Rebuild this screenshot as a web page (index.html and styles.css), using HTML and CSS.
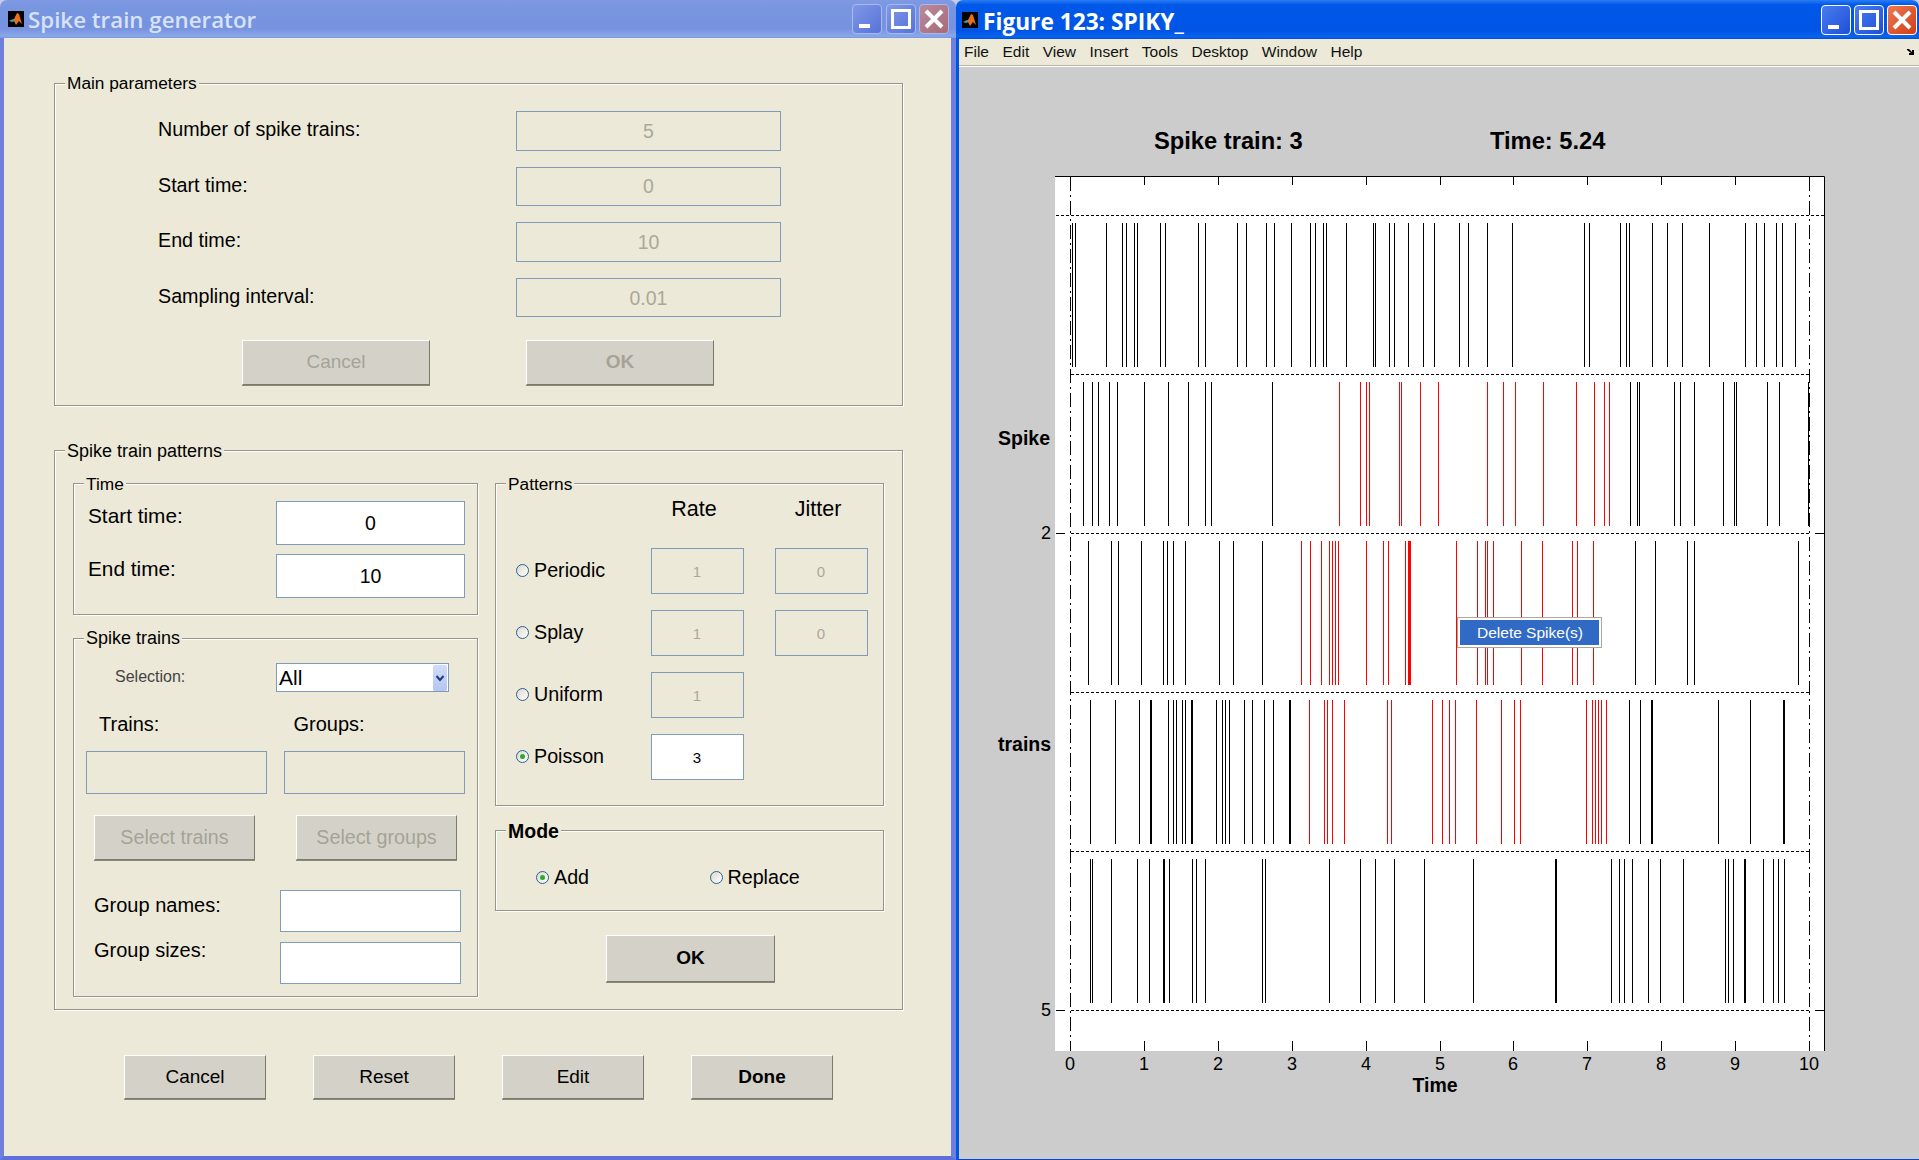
FILE: index.html
```html
<!DOCTYPE html>
<html lang="en">
<head>
  <meta charset="UTF-8" />
  <title>Spike train generator</title>
  <link rel="stylesheet" href="styles.css">
</head>
<body>

  <div class="desktop">

    <!-- left window: generator dialog -->
    <section class="dialog">
      <header class="titlebar inactive">
        <svg class="app-icon" viewBox="0 0 16 16"><rect width="16" height="16" fill="#000"/><path d="M2 10 L6 8 L9 2 L11 3 L14 13 L11 10 L8 14 L6 10 Z" fill="#e8701a"/><path d="M1 10 L5 8 L7 10 L4 11 Z" fill="#3aa0b8"/></svg>
        <span class="title-text">Spike train generator</span>
        <div class="win-btns">
          <button class="win-btn"><svg viewBox="0 0 30 30"><rect x="7" y="20" width="11" height="4" fill="#fff"/></svg></button>
          <button class="win-btn"><svg viewBox="0 0 30 30"><rect x="6.5" y="6.5" width="17" height="17" fill="none" stroke="#fff" stroke-width="3"/></svg></button>
          <button class="win-btn close"><svg viewBox="0 0 30 30"><path d="M7 7 L23 23 M23 7 L7 23" stroke="#fff" stroke-width="4"/></svg></button>
        </div>
      </header>

      <div class="dialog-body">

        <fieldset class="group main-params">
          <legend>Main parameters</legend>
          <div class="param-row"><label>Number of spike trains:</label><div class="field off">5</div></div>
          <div class="param-row"><label>Start time:</label><div class="field off">0</div></div>
          <div class="param-row"><label>End time:</label><div class="field off">10</div></div>
          <div class="param-row"><label>Sampling interval:</label><div class="field off">0.01</div></div>
          <div class="param-btns">
            <button class="btn disabled">Cancel</button>
            <button class="btn disabled strong">OK</button>
          </div>
        </fieldset>

        <fieldset class="group patterns-outer">
          <legend>Spike train patterns</legend>
          <div class="pattern-cols">

            <div class="col-left">
              <fieldset class="group time-box">
                <legend>Time</legend>
                <div class="time-row"><label>Start time:</label><div class="field">0</div></div>
                <div class="time-row"><label>End time:</label><div class="field">10</div></div>
              </fieldset>

              <fieldset class="group trains-box">
                <legend>Spike trains</legend>
                <div class="select-row">
                  <label>Selection:</label>
                  <div class="select">
                    <span>All</span>
                    <span class="select-arrow"><svg viewBox="0 0 14 26"><path d="M3.5 11 L7 15 L10.500 11" fill="none" stroke="#1d3c7a" stroke-width="2"/></svg></span>
                  </div>
                </div>
                <div class="pair-labels"><label>Trains:</label><label>Groups:</label></div>
                <div class="pair-fields"><div class="field off"></div><div class="field off"></div></div>
                <div class="pair-btns">
                  <button class="btn disabled">Select trains</button>
                  <button class="btn disabled">Select groups</button>
                </div>
                <div class="group-row"><label>Group names:</label><div class="field"></div></div>
                <div class="group-row tight"><label>Group sizes:</label><div class="field"></div></div>
              </fieldset>
            </div>

            <div class="col-right">
              <fieldset class="group patterns-box">
                <legend>Patterns</legend>
                <div class="rate-grid">
                  <span></span><span class="col-head">Rate</span><span class="col-head">Jitter</span>
                  <div class="radio-label"><span class="radio"></span>Periodic</div><div class="field off small">1</div><div class="field off small">0</div>
                  <div class="radio-label"><span class="radio"></span>Splay</div><div class="field off small">1</div><div class="field off small">0</div>
                  <div class="radio-label"><span class="radio"></span>Uniform</div><div class="field off small">1</div><span></span>
                  <div class="radio-label"><span class="radio on"></span>Poisson</div><div class="field small">3</div><span></span>
                </div>
              </fieldset>

              <fieldset class="group mode-box">
                <legend>Mode</legend>
                <div class="mode-row">
                  <div class="radio-label"><span class="radio on"></span>Add</div>
                  <div class="radio-label"><span class="radio"></span>Replace</div>
                </div>
              </fieldset>

              <button class="btn strong ok-btn">OK</button>
            </div>

          </div>
        </fieldset>

        <div class="bottom-btns">
          <button class="btn">Cancel</button>
          <button class="btn">Reset</button>
          <button class="btn">Edit</button>
          <button class="btn strong">Done</button>
        </div>

      </div>
    </section>

    <!-- right window: figure -->
    <section class="figure-win">
      <header class="titlebar active">
        <svg class="app-icon" viewBox="0 0 16 16"><rect width="16" height="16" fill="#000"/><path d="M2 10 L6 8 L9 2 L11 3 L14 13 L11 10 L8 14 L6 10 Z" fill="#e8701a"/><path d="M1 10 L5 8 L7 10 L4 11 Z" fill="#3aa0b8"/></svg>
        <span class="title-text">Figure 123: SPIKY_</span>
        <div class="win-btns">
          <button class="win-btn"><svg viewBox="0 0 30 30"><rect x="7" y="20" width="11" height="4" fill="#fff"/></svg></button>
          <button class="win-btn"><svg viewBox="0 0 30 30"><rect x="6.5" y="6.5" width="17" height="17" fill="none" stroke="#fff" stroke-width="3"/></svg></button>
          <button class="win-btn close"><svg viewBox="0 0 30 30"><path d="M7 7 L23 23 M23 7 L7 23" stroke="#fff" stroke-width="4"/></svg></button>
        </div>
      </header>

      <div class="figure-body">
        <nav class="menubar">
          <span>File</span><span>Edit</span><span>View</span><span>Insert</span><span>Tools</span><span>Desktop</span><span>Window</span><span>Help</span>
          <svg class="dock-arrow" viewBox="0 0 8 8"><path d="M0 1 L2 1 L5 4 L5 2 L7 2 L7 7 L2 7 L2 5 L4 5 L0 2 Z" fill="#000"/></svg>
        </nav>

        <div class="figure">
          <!-- viewBox uses page coordinates so the spike lists below stay readable -->
          <svg id="plot" class="plot" viewBox="959 66 960 1093">
            <text class="head" x="1154" y="149">Spike train: 3</text>
            <text class="head" x="1490" y="149">Time: 5.24</text>

            <rect x="1055" y="176" width="770" height="875" fill="#fff"/>
            <g id="spikes"></g>
            <path class="axis" d="M1055 176.500 H1824.500 V1051"/>
            <g id="ticks"></g>

            <text class="axis-title" x="998" y="445">Spike</text>
            <text class="axis-title" x="998" y="751">trains</text>
            <text class="tick-label end" x="1051" y="539">2</text>
            <text class="tick-label end" x="1051" y="1016">5</text>

            <text class="tick-label" x="1070" y="1070">0</text>
            <text class="tick-label" x="1144" y="1070">1</text>
            <text class="tick-label" x="1218" y="1070">2</text>
            <text class="tick-label" x="1292" y="1070">3</text>
            <text class="tick-label" x="1366" y="1070">4</text>
            <text class="tick-label" x="1440" y="1070">5</text>
            <text class="tick-label" x="1513" y="1070">6</text>
            <text class="tick-label" x="1587" y="1070">7</text>
            <text class="tick-label" x="1661" y="1070">8</text>
            <text class="tick-label" x="1735" y="1070">9</text>
            <text class="tick-label" x="1809" y="1070">10</text>
            <text class="axis-title middle" x="1435" y="1092">Time</text>
          </svg>

          <div class="context-menu"><div class="context-item">Delete Spike(s)</div></div>
        </div>
      </div>
    </section>

  </div>

  <script>
    const SVG_NS = 'http://www.w3.org/2000/svg';

    // one entry per train: top of the row, then x positions [black, red, thick black]
    const trains = [
      { y: 223, black: [1072,1075,1106,1122,1126,1134,1137,1160,1165,1198,1205,1237,1246,1266,1274,1291,1310,1315,1323,1326,1346,1373,1375,1389,1394,1408,1423,1434,1459,1468,1487,1512,1584,1589,1620,1626,1629,1652,1667,1682,1709,1745,1756,1764,1776,1782,1795], red: [], thick: [] },
      { y: 382, black: [1083,1092,1098,1109,1117,1144,1168,1188,1205,1211,1272,1630,1637,1639,1674,1680,1694,1723,1734,1736,1767,1779,1808], red: [1339,1360,1366,1369,1399,1401,1420,1438,1487,1503,1515,1543,1576,1594,1604,1609], thick: [] },
      { y: 541, black: [1088,1111,1118,1141,1163,1167,1173,1185,1219,1233,1262,1635,1655,1687,1694,1798], red: [1301,1310,1321,1329,1332,1335,1338,1366,1383,1388,1405,1408,1409,1410,1456,1477,1485,1487,1493,1521,1542,1572,1577,1593], thick: [] },
      { y: 700, black: [1090,1115,1139,1168,1173,1176,1182,1185,1216,1222,1225,1229,1244,1252,1264,1273,1629,1640,1718,1750], red: [1309,1324,1327,1332,1344,1387,1391,1432,1442,1449,1455,1476,1501,1514,1520,1586,1592,1595,1598,1601,1606], thick: [1150,1191,1289,1651,1783] },
      { y: 859, black: [1090,1092,1111,1137,1149,1169,1192,1196,1205,1262,1265,1329,1360,1375,1394,1424,1473,1611,1619,1624,1632,1648,1660,1683,1725,1728,1733,1763,1773,1778,1784], red: [], thick: [1163,1555,1744] }
    ];

    function addPath(parent, cls, d) {
      const p = document.createElementNS(SVG_NS, 'path');
      p.setAttribute('class', cls);
      p.setAttribute('d', d);
      parent.appendChild(p);
    }

    function spikePath(xs, y) {
      return xs.map(x => `M${x + 0.5} ${y}V${y + 144}`).join('');
    }

    const spikes = document.getElementById('spikes');
    trains.forEach(t => {
      addPath(spikes, 'spike', spikePath(t.black, t.y));
      addPath(spikes, 'spike red', spikePath(t.red, t.y));
      addPath(spikes, 'spike thick', t.thick.map(x => `M${x + 1} ${t.y}V${t.y + 144}`).join(''));
    });

    const ticks = document.getElementById('ticks');
    [1070,1144,1218,1292,1366,1440,1513,1587,1661,1735,1809].forEach(x => {
      addPath(ticks, 'axis', `M${x + 0.5} 177V185M${x + 0.5} 1041V1051`);
    });
    [533,1010].forEach(y => {
      addPath(ticks, 'axis', `M1056 ${y + 0.5}H1065M1815 ${y + 0.5}H1824`);
    });

    // dashed train separators and the two dash-dot limits
    addPath(ticks, 'sep', 'M1056 215.500H1824');
    [374,533,692,851,1010].forEach(y => addPath(ticks, 'sep', `M1071 ${y + 0.5}H1810`));
    [1070,1809].forEach(x => addPath(ticks, 'limit', `M${x + 0.5} 177V1051`));
  </script>

</body>
</html>
```

FILE: styles.css
```css
* {
  box-sizing: border-box;
}

html, body {
  margin: 0;
  height: 100%;
  overflow: hidden;
}

body {
  font-family: "Liberation Sans", Arial, sans-serif;
  font-size: 19.700px;
  color: #000;
  background-color: #c5cde8;
}

.desktop {
  display: flex;
  width: 1919px;
  height: 1160px;
}

/* windows */

.dialog {
  width: 956px;
  display: flex;
  flex-direction: column;
}

.figure-win {
  width: 963px;
  display: flex;
  flex-direction: column;
}

.titlebar {
  display: flex;
  align-items: center;
  flex: none;
  border-radius: 7px 7px 0 0;
}

.titlebar.inactive {
  height: 38px;
  padding: 0 7px 0 8px;
  background: linear-gradient(#8099e4, #7896e0 20%, #7792df 75%, #89a8ea 95%, #7b95df);
  color: #d6e2f7;
}

.titlebar.active {
  height: 39px;
  padding: 0 2px 0 6px;
  background: linear-gradient(#2a7df5, #0058e8 12%, #0055e5 80%, #0a64f0 94%, #0050d8);
  color: #fff;
}

.app-icon {
  width: 16px;
  height: 16px;
  flex: none;
}

.title-text {
  font-family: "Open Sans", sans-serif;
  font-weight: 600;
  font-size: 22.300px;
  margin-left: 4px;
  white-space: nowrap;
}

.titlebar.active .title-text {
  font-size: 22.700px;
  font-weight: 700;
  margin-left: 5px;
  padding-top: 3px;
}

.win-btns {
  display: flex;
  gap: 3.500px;
  margin-left: auto;
}

.active .win-btns {
  gap: 3px;
}

.win-btn {
  width: 30px;
  height: 30px;
  padding: 0;
  display: block;
  border-radius: 4px;
  border: 1px solid #a9bbee;
  background: linear-gradient(135deg, #8098e8, #5673d8);
}

.win-btn svg {
  display: block;
  margin: -1px;
  width: 30px;
  height: 30px;
}

.win-btn.close {
  background: linear-gradient(135deg, #b88a9c, #a96a78);
}

.active .win-btn {
  border-color: #fff;
  background: linear-gradient(135deg, #4a7cf0, #1d4fd8);
}

.active .win-btn.close {
  background: linear-gradient(135deg, #ee7a50, #cf3d18);
}

.dialog-body {
  flex: 1;
  background-color: #ece9d8;
  border-left: 4px solid #6f80dc;
  border-right: 5px solid #6f80dc;
  border-bottom: 4px solid #5f70dc;
  padding: 36px 0 0 50px;
}

/* group boxes */

.group {
  --pad: 0px;
  margin: 0;
  padding: 0 0 0 var(--pad);
  min-width: 0;
  border: 1px solid #97958a;
  box-shadow: 1px 1px 0 #fff, inset 1px 1px 0 #fff;
}

/* legends sit on the padding edge, so take the box padding back out */
.group legend {
  margin-left: calc(10px - var(--pad));
  padding: 0 2px;
  height: 18px;
  line-height: 18px;
  font-size: 17.300px;
  background-color: #ece9d8;
}

.field {
  display: flex;
  align-items: center;
  justify-content: center;
  padding-top: 1px;
  border: 1px solid #7f9db9;
  background-color: #fff;
  font-size: 19.500px;
}

.field.off {
  background-color: #ece9d8;
  color: #aca899;
}

.field.small {
  font-size: 15px;
}

.btn {
  padding: 0;
  font-family: inherit;
  font-size: 19px;
  color: #000;
  background-color: #d4d2c8;
  border: 1px solid;
  border-color: #fff #7c7a6c #7c7a6c #fff;
  box-shadow: 0 1px 0 #8a8878;
}

.btn.disabled {
  color: #a5a397;
}

.btn.strong {
  font-weight: bold;
}

/* main parameters */

.main-params {
  width: 849px;
  padding-top: 19px;
  padding-bottom: 20px;
}

.param-row {
  display: flex;
  align-items: center;
  height: 39.500px;
  margin-bottom: 16.100px;
  padding-left: 103px;
}

.param-row label {
  width: 358px;
  margin-top: -2px;
}

.param-row .field {
  width: 265px;
  height: 100%;
}

.param-btns {
  display: flex;
  gap: 96px;
  padding-left: 187px;
  margin-top: 22.500px;
}

.param-btns .btn {
  width: 188px;
  height: 45px;
}

/* spike train patterns */

.patterns-outer {
  --pad: 18px;
  width: 849px;
  margin-top: 36px;
  padding-top: 15px;
  padding-bottom: 12px;
}

.patterns-outer > legend,
.trains-box > legend {
  font-size: 18px;
}

.pattern-cols {
  display: flex;
  gap: 17px;
}

.col-left {
  width: 405px;
}

.col-right {
  width: 389px;
}

.time-box {
  --pad: 14px;
  padding-top: 8px;
  padding-bottom: 16px;
}

.time-row {
  display: flex;
  height: 44px;
}

.time-row + .time-row {
  margin-top: 9.500px;
}

.time-row label {
  width: 188px;
  line-height: 30px;
  font-size: 20.800px;
}

.time-row .field {
  width: 189px;
}

.trains-box {
  --pad: 12px;
  margin-top: 14px;
  padding-top: 16px;
  padding-bottom: 11.500px;
}

.select-row {
  display: flex;
  align-items: center;
  height: 29px;
  padding-left: 29px;
}

.select-row label {
  width: 161px;
  font-size: 16px;
  color: #444;
  margin-top: -1px;
}

.select {
  display: flex;
  align-items: center;
  justify-content: space-between;
  width: 173px;
  height: 29px;
  padding: 0 1px 0 2px;
  background-color: #fff;
  border: 1px solid #7f9db9;
  font-size: 21px;
}

.select-arrow {
  width: 14px;
  height: 26px;
  background: linear-gradient(#d0dcf8, #b4c6f2);
  border-radius: 2px;
}

.select-arrow svg {
  display: block;
}

.pair-labels {
  display: flex;
  margin-top: 22px;
  height: 20px;
  line-height: 20px;
  padding-left: 13px;
  font-size: 20px;
}

.pair-labels label {
  flex: none;
  width: 194.500px;
}

.pair-fields {
  display: flex;
  gap: 17px;
  margin-top: 17px;
}

.pair-fields .field {
  width: 181px;
  height: 43px;
}

.pair-btns {
  display: flex;
  gap: 41px;
  margin-top: 21px;
  padding-left: 8px;
}

.pair-btns .btn {
  width: 161px;
  height: 45px;
  font-size: 19.700px;
}

.group-row {
  display: flex;
  height: 42px;
  margin-top: 10px;
  padding-left: 8px;
  font-size: 20px;
}

.pair-btns + .group-row {
  margin-top: 30px;
}

.group-row label {
  width: 186px;
  line-height: 30px;
}

.group-row.tight label {
  line-height: 16px;
}

.group-row .field {
  width: 181px;
}

.patterns-box {
  --pad: 20px;
  padding-top: 6px;
  padding-bottom: 25px;
}

.rate-grid {
  display: grid;
  grid-template-columns: 103.500px 93px 93px;
  grid-template-rows: 33px;
  grid-auto-rows: 46px;
  column-gap: 31px;
  row-gap: 16px;
}

.col-head {
  text-align: center;
  line-height: 20px;
  height: 20px;
  padding-right: 6px;
  font-size: 21.500px;
}

.radio-label {
  display: flex;
  align-items: center;
  gap: 5px;
  white-space: nowrap;
}

.radio {
  position: relative;
  width: 13px;
  height: 13px;
  flex: none;
  border: 1px solid #2c5f94;
  border-radius: 50%;
  background: linear-gradient(135deg, #dcd8cc, #fff);
}

.radio.on::after {
  content: "";
  position: absolute;
  left: 3px;
  top: 3px;
  width: 5px;
  height: 5px;
  border-radius: 50%;
  background-color: #2fa82f;
}

.mode-box {
  --pad: 40px;
  margin-top: 16px;
  padding-top: 28px;
  padding-bottom: 22px;
}

.mode-box legend {
  font-size: 19.500px;
  font-weight: bold;
}

.mode-row {
  display: flex;
  height: 20px;
}

.mode-row .radio-label {
  width: 173.500px;
}

.ok-btn {
  display: block;
  width: 169px;
  height: 47px;
  margin: 24px 0 0 111px;
}

.bottom-btns {
  display: flex;
  gap: 47px;
  margin: 45px 0 0 70px;
}

.bottom-btns .btn {
  width: 142px;
  height: 44px;
}

/* figure window */

.figure-body {
  flex: 1;
  display: flex;
  flex-direction: column;
  background-color: #ccc;
  border-left: 3px solid #0055e5;
  border-bottom: 1px solid #0048d8;
}

.menubar {
  display: flex;
  align-items: center;
  gap: 13.500px;
  flex: none;
  height: 27px;
  padding: 0 4px 0 5px;
  background-color: #ece9d8;
  border-bottom: 1px solid #b8b6a8;
  box-shadow: 0 1px 0 #fff;
  font-size: 15.500px;
  color: #111;
}

.dock-arrow {
  width: 8px;
  height: 8px;
  margin-left: auto;
}

.figure {
  position: relative;
  flex: 1;
}

.plot {
  display: block;
  width: 960px;
  height: 1093px;
}

.spike {
  fill: none;
  stroke: #000;
  stroke-width: 1;
}

.spike.red {
  stroke: #f00;
}

.spike.thick {
  stroke-width: 2;
}

.axis {
  fill: none;
  stroke: #000;
  stroke-width: 1;
}

.sep {
  fill: none;
  stroke: #000;
  stroke-width: 1;
  stroke-dasharray: 3 2;
}

.limit {
  fill: none;
  stroke: #000;
  stroke-width: 1;
  stroke-dasharray: 14 4 2 4;
}

.head {
  font-size: 23.700px;
  font-weight: bold;
}

.axis-title {
  font-size: 19.500px;
  font-weight: bold;
}

.tick-label {
  font-size: 18px;
  text-anchor: middle;
}

.end {
  text-anchor: end;
}

.middle {
  text-anchor: middle;
}

.context-menu {
  position: absolute;
  left: 498px;
  top: 551px;
  width: 145px;
  height: 31px;
  padding: 2px;
  background-color: #fff;
  border: 1px solid #aca899;
}

.context-item {
  height: 100%;
  padding-left: 17px;
  line-height: 25px;
  font-size: 15.500px;
  color: #fff;
  background-color: #316ac5;
}
```
